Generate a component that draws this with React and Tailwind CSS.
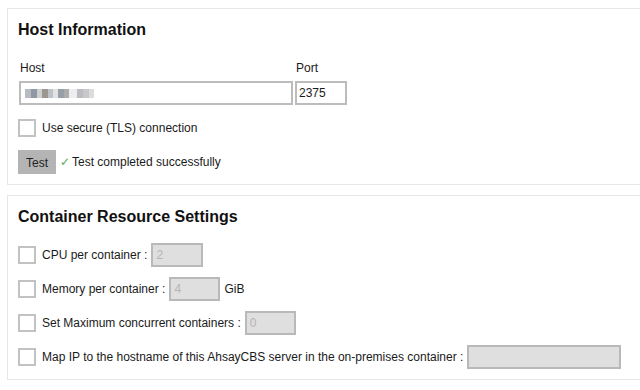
const blurBlocks = [
  ['w-[6px]', 'bg-[#b7bcc2]'],
  ['w-[6px]', 'bg-[#8f98a2]'],
  ['w-[5px]', 'bg-[#cfcfcf]'],
  ['w-[6px]', 'bg-[#9c9691]'],
  ['w-[5px]', 'bg-[#bfc3c8]'],
  ['w-[5px]', 'bg-[#e2e2e2]'],
  ['w-[6px]', 'bg-[#97a0a9]'],
  ['w-[5px]', 'bg-[#adadad]'],
  ['w-[8px]', 'bg-[#ededed]'],
  ['w-[6px]', 'bg-[#b9bdc2]'],
  ['w-[6px]', 'bg-[#c8c8c8]'],
  ['w-[5px]', 'bg-[#dcdcdc]'],
];

const Checkbox = () => (
  <span className="w-[18px] h-[18px] border-2 border-[#c2c2c2] bg-white shrink-0" />
);

const DisabledInput = ({ value, width }) => (
  <span
    className={`${width} h-[24px] border-2 border-[#b9b9b9] bg-[#dfdfdf] text-[#b5b5b5] pl-[3px] flex items-center`}
  >
    {value}
  </span>
);

const Panel = ({ title, height, className, children }) => (
  <section
    className={`ml-[7px] w-[700px] ${height} border border-[#e6e6e6] pl-[10px] pt-[11px] ${className}`}
  >
    <h2 className="text-[16px] leading-[20px] font-bold text-[#111]">{title}</h2>
    {children}
  </section>
);

export default function App() {
  return (
    <div
      className="w-[640px] h-[390px] overflow-hidden bg-white text-[12px] leading-[16px] text-[#1a1a1a]"
      style={{ fontFamily: '"Liberation Sans", Arial, sans-serif' }}
    >
      <Panel title="Host Information" height="h-[177px]" className="mt-[8px]">
        <div className="mt-[20px] flex gap-[2px] ml-[1px]">
          <div className="w-[274px]">
            <div className="pl-[1px]">Host</div>
            <div className="mt-[5px] h-[24px] border-2 border-[#bcbcbc] flex items-center pl-[4px]">
              {blurBlocks.map(([w, bg], i) => (
                <span key={i} className={`${w} h-[9px] ${bg}`} />
              ))}
            </div>
          </div>
          <div className="w-[52px]">
            <div className="pl-[1px]">Port</div>
            <div className="mt-[5px] h-[24px] border-2 border-[#bcbcbc] flex items-center pl-[2px]">
              2375
            </div>
          </div>
        </div>
        <label className="mt-[14px] flex items-center gap-[6px]">
          <Checkbox />
          <span>Use secure (TLS) connection</span>
        </label>
        <div className="mt-[13px] flex items-center">
          <button className="w-[38px] h-[24px] bg-[#b4b4b4] text-[#222] flex items-center justify-center pt-[1px]">
            Test
          </button>
          <span className="ml-[4px] text-[#5cae5c]">✓</span>
          <span className="ml-[2px]">Test completed successfully</span>
        </div>
      </Panel>

      <Panel title="Container Resource Settings" height="h-[185px]" className="mt-[10px]">
        <div className="mt-[16px] flex flex-col gap-[10px]">
          <div className="flex items-center h-[24px]">
            <Checkbox />
            <span className="ml-[6px] mr-[4px]">CPU per container :</span>
            <DisabledInput value="2" width="w-[52px]" />
          </div>
          <div className="flex items-center h-[24px]">
            <Checkbox />
            <span className="ml-[6px] mr-[4px]">Memory per container :</span>
            <DisabledInput value="4" width="w-[51px]" />
            <span className="ml-[4px]">GiB</span>
          </div>
          <div className="flex items-center h-[24px]">
            <Checkbox />
            <span className="ml-[6px] mr-[4px]">Set Maximum concurrent containers :</span>
            <DisabledInput value="0" width="w-[51px]" />
          </div>
          <div className="flex items-center h-[24px]">
            <Checkbox />
            <span className="ml-[6px] mr-[4px]">
              Map IP to the hostname of this AhsayCBS server in the on-premises container :
            </span>
            <DisabledInput value="" width="w-[154px]" />
          </div>
        </div>
      </Panel>
    </div>
  );
}
